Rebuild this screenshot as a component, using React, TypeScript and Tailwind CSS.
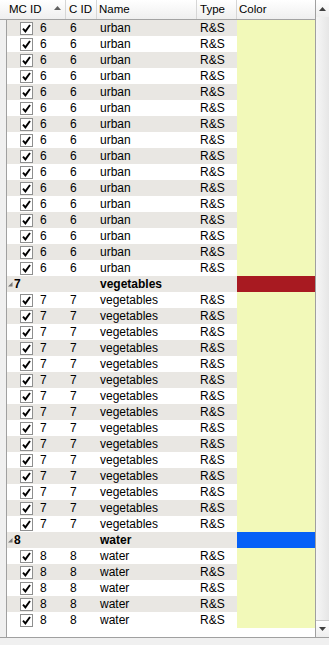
import React from "react";

type Row =
  | { kind: "group"; id: string; name: string; color: string }
  | { kind: "item"; id: string; name: string };

const build = (): Row[] => {
  const out: Row[] = [];
  for (let i = 0; i < 16; i++) out.push({ kind: "item", id: "6", name: "urban" });
  out.push({ kind: "group", id: "7", name: "vegetables", color: "bg-[#a81a21]" });
  for (let i = 0; i < 15; i++) out.push({ kind: "item", id: "7", name: "vegetables" });
  out.push({ kind: "group", id: "8", name: "water", color: "bg-[#0560f7]" });
  for (let i = 0; i < 5; i++) out.push({ kind: "item", id: "8", name: "water" });
  return out;
};

const rows = build();

const Check = () => (
  <svg width="13" height="13" viewBox="0 0 13 13" className="shrink-0">
    <rect x="0.5" y="0.5" width="12" height="12" fill="#fff" stroke="#8e8f8f" />
    <path d="M3 6.6 L5.4 9.4 L10 3" fill="none" stroke="#000" strokeWidth="1.9" />
  </svg>
);

const Branch = () => (
  <svg width="5" height="5" viewBox="0 0 5 5" className="shrink-0">
    <path d="M0 4.5 L4.5 0 L4.5 4.5 Z" fill="#777" />
  </svg>
);

const HeaderCell = ({ w, label, sort, last }: { w: string; label: string; sort?: boolean; last?: boolean }) => (
  <div className={`${w} h-full flex items-center justify-between ${last ? "" : "border-r border-[#d6d6d6]"}`}>
    <span>{label}</span>
    {sort && (
      <svg width="7" height="4" viewBox="0 0 7 4" className="mr-[4px] mb-[3px]">
        <path d="M0 4 L3.5 0 L7 4 Z" fill="#606060" />
      </svg>
    )}
  </div>
);

export default function App() {
  return (
    <div className="w-[329px] h-[645px] bg-[#f0f0f0] text-black text-[12px] leading-none" style={{ fontFamily: '"Liberation Sans", Arial, sans-serif' }}>
      <div className="flex h-[638px] border-b border-[#a0a0a0]">
        <div className="flex flex-col flex-1">
          {/* header */}
          <div className="h-[20px] flex bg-gradient-to-b from-white to-[#efefef] border-b border-[#a3a3a3] text-[11.5px]">
            <HeaderCell w="w-[66px] pl-[9px]" label="MC ID" sort />
            <HeaderCell w="w-[31px] pl-[3px]" label="C ID" />
            <HeaderCell w="w-[100px] pl-[2px]" label="Name" />
            <HeaderCell w="w-[40px] pl-[3px]" label="Type" />
            <HeaderCell w="flex-1 pl-[2px]" label="Color" last />
          </div>
          {/* body */}
          <div className="flex flex-1">
            <div className="w-[7px] bg-[#f0f0f0] border-r border-[#a0a0a0]" />
            <div className="flex-1 bg-white">
              {rows.map((r, i) => {
                const stripe = i % 2 === 0 ? "bg-[#e9e7e3]" : "bg-white";
                if (r.kind === "group") {
                  return (
                    <div key={i} className="h-[16px] flex font-bold">
                      <div className={`w-[230px] flex items-center ${stripe}`}>
                        <div className="w-[93px] flex items-center pl-[1px] gap-[1px]">
                          <Branch />
                          <span>{r.id}</span>
                        </div>
                        <span>{r.name}</span>
                      </div>
                      <div className={`flex-1 ${r.color}`} />
                    </div>
                  );
                }
                return (
                  <div key={i} className="h-[16px] flex">
                    <div className={`w-[230px] flex items-center ${stripe}`}>
                      <div className="w-[59px] flex items-center pl-[13px] gap-[7px]">
                        <Check />
                        <span>{r.id}</span>
                      </div>
                      <div className="w-[31px] pl-[4px]">{r.id}</div>
                      <div className="w-[100px] pl-[3px]">{r.name}</div>
                      <div className="w-[40px] pl-[3px]">R&amp;S</div>
                    </div>
                    <div className="flex-1 bg-[#f2f9b9]" />
                  </div>
                );
              })}
            </div>
          </div>
        </div>
        {/* scrollbar */}
        <div className="w-[14px] flex flex-col border-l border-[#a0a0a0] bg-gradient-to-r from-[#f6f6f6] to-[#e6e6e6]">
          <div className="h-[17px] flex items-center justify-center bg-gradient-to-b from-white to-[#eeeeee]">
            <svg width="7" height="4" viewBox="0 0 7 4">
              <path d="M0 4 L3.5 0 L7 4 Z" fill="#404040" />
            </svg>
          </div>
          <div className="flex-1" />
          <div className="h-[17px] flex items-center justify-center border-t border-[#c8c8c8] bg-gradient-to-b from-white to-[#eeeeee]">
            <svg width="7" height="4" viewBox="0 0 7 4">
              <path d="M0 0 L7 0 L3.5 4 Z" fill="#404040" />
            </svg>
          </div>
        </div>
      </div>
    </div>
  );
}
